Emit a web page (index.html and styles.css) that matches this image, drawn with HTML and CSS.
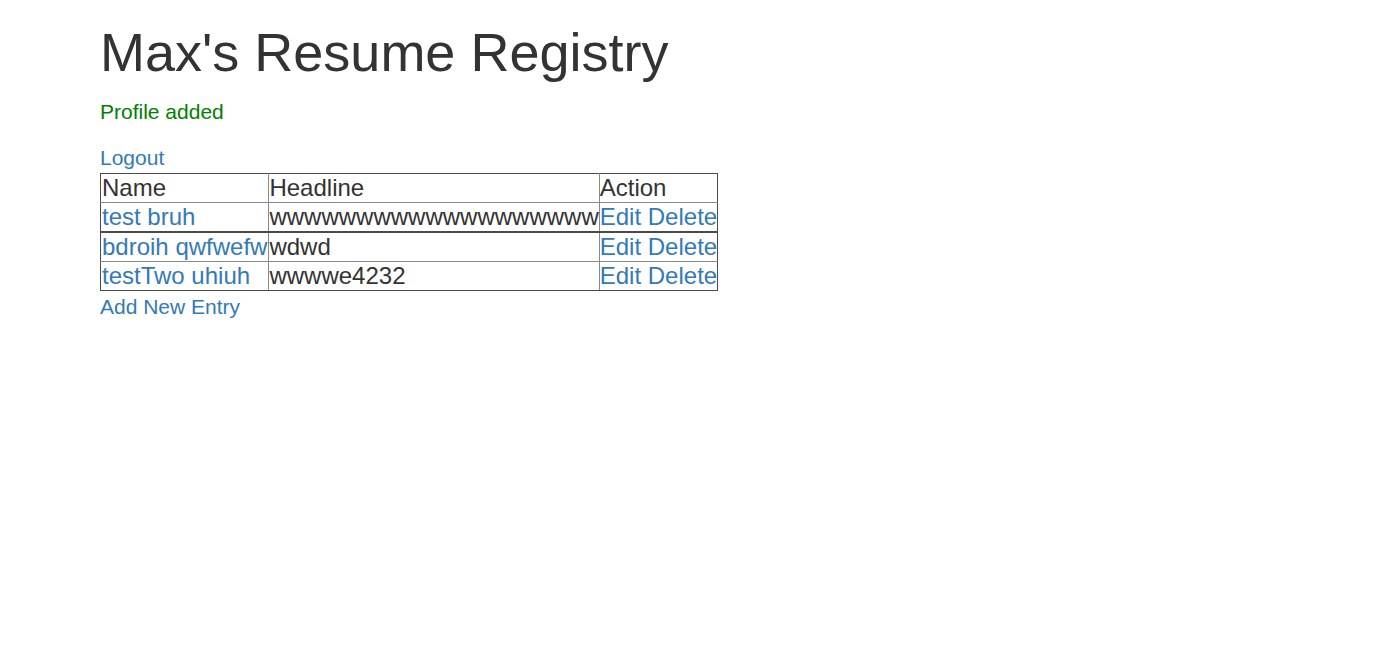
FILE: index.html
```html
<!DOCTYPE html>
<html>
<head>
<meta charset="utf-8">
<title>Max's Resume Registry</title>
<link rel="stylesheet" href="styles.css">
</head>
<body>
<div class="container">
  <h1 class="title">Max's Resume Registry</h1>
  <p class="flash">Profile added</p>
  <div class="logout-line"><a href="#">Logout</a></div>
  <table class="registry">
    <tr><th>Name</th><th>Headline</th><th>Action</th></tr>
    <tr><td><a href="#">test bruh</a></td><td>wwwwwwwwwwwwwwwwwww</td><td><a href="#">Edit</a> <a href="#">Delete</a></td></tr>
    <tr class="group-start"><td><a href="#">bdroih qwfwefw</a></td><td>wdwd</td><td><a href="#">Edit</a> <a href="#">Delete</a></td></tr>
    <tr><td><a href="#">testTwo uhiuh</a></td><td>wwwwe4232</td><td><a href="#">Edit</a> <a href="#">Delete</a></td></tr>
  </table>
  <div class="add-line"><a href="#">Add New Entry</a></div>
</div>
</body>
</html>
```

FILE: styles.css
```css
html, body {
  margin: 0;
  padding: 0;
  background: #fff;
}
body {
  font-family: "Liberation Sans", Arial, Helvetica, sans-serif;
  font-size: 21px;
  line-height: 30px;
  color: #333;
}
a {
  color: #337ab7;
  text-decoration: none;
}
.container {
  padding-left: 100px;
}
.title {
  font-size: 54px;
  font-weight: 500;
  line-height: 59.4px;
  margin: 23px 0 15px;
}
.flash {
  color: #008000;
  margin: 0 0 15px;
}
.logout-line {
  padding-top: 1px;
  height: 29.6px;
}
.registry {
  border-collapse: collapse;
  border: 1px solid #4a4a4a;
  font-size: 24px;
  line-height: 28px;
}
.registry th,
.registry td {
  padding: 0;
  border: 1px solid #8a8a8a;
  text-align: left;
  font-weight: normal;
  white-space: nowrap;
  vertical-align: middle;
}
.registry th:first-child,
.registry td:first-child {
  padding: 0 1px;
  border-left: 1px solid #4a4a4a;
}
.registry tr:first-child th {
  border-top: 1px solid #4a4a4a;
}
.registry .group-start td {
  border-top: 2px solid #4a4a4a;
}
.registry tr:last-child td {
  border-bottom: 1px solid #4a4a4a;
}
.registry td:last-child,
.registry th:last-child {
  border-right: 1px solid #4a4a4a;
}
.add-line {
  margin-top: 1px;
}
```
